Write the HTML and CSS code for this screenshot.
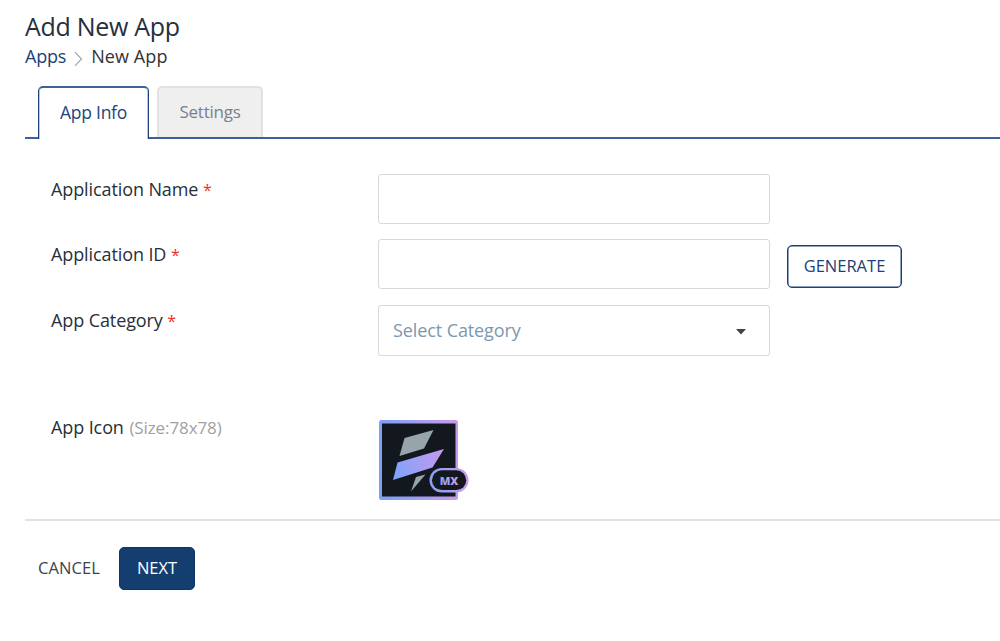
FILE: index.html
```html
<!DOCTYPE html>
<html lang="en">
<head>
<meta charset="utf-8">
<title>Add New App</title>
<link rel="stylesheet" href="styles.css">
</head>
<body>
<main class="page">
  <h1 class="title">Add New App</h1>
  <nav class="breadcrumb">
    <a class="crumb-link" href="#">Apps</a>
    <svg class="crumb-sep" width="9" height="16" viewBox="0 0 9 16"><path d="M1 1.2 7.5 8 1 14.8"/></svg>
    <span class="crumb-current">New App</span>
  </nav>
  <div class="tabs">
    <a class="tab tab-active" href="#">App Info</a>
    <a class="tab tab-idle" href="#">Settings</a>
  </div>
  <form class="form">
    <div class="row row-name">
      <label class="label">Application Name <span class="req">*</span></label>
      <div class="field"></div>
    </div>
    <div class="row row-id">
      <label class="label">Application ID <span class="req">*</span></label>
      <div class="field"></div>
      <button class="btn generate" type="button">GENERATE</button>
    </div>
    <div class="row">
      <label class="label">App Category <span class="req">*</span></label>
      <div class="field select">
        <span class="placeholder">Select Category</span>
        <svg width="10" height="6" viewBox="0 0 10 6"><path d="M0 0h10L5 5.5z" fill="#444"/></svg>
      </div>
    </div>
    <div class="row icon-row">
      <label class="label">App Icon <span class="hint">(Size:78x78)</span></label>
      <svg class="app-icon" width="92" height="82" viewBox="0 0 92 82">
        <defs>
          <linearGradient id="edge" gradientUnits="userSpaceOnUse" x1="1" y1="40" x2="80" y2="34"><stop offset="0" stop-color="#7ba1f5"/><stop offset="1" stop-color="#c99bea"/></linearGradient>
          <linearGradient id="band" x1="0" x2="1" y1=".6" y2=".4"><stop offset="0" stop-color="#7fa4fa"/><stop offset="1" stop-color="#c39af0"/></linearGradient>
          <linearGradient id="pill" x1="0" x2="1"><stop offset="0" stop-color="#86a0f3"/><stop offset="1" stop-color="#cc9bea"/></linearGradient>
        </defs>
        <rect x="1" y="0" width="79" height="80" rx="2.5" fill="url(#edge)"/>
        <rect x="4" y="3.5" width="73.5" height="73" fill="#12181e"/>
        <path d="M26.5 18 55.5 10 46 28.5 21.5 36z" fill="#98a4ab"/>
        <path d="M19.5 42.5 66 29 54.5 47.5 15 60z" fill="url(#band)"/>
        <path d="M38 57 47.5 54.5 33 71.5z" fill="#98a4ab"/>
        <rect x="51.5" y="48" width="39" height="24.5" rx="12.25" fill="url(#pill)"/>
        <rect x="54" y="50.3" width="34.2" height="19.8" rx="9.9" fill="#12181e"/>
        <text class="badge-text" x="71" y="64.5" text-anchor="middle" fill="url(#pill)">MX</text>
      </svg>
    </div>
  </form>
  <footer class="actions">
    <a class="cancel" href="#">CANCEL</a>
    <button class="btn next" type="button">NEXT</button>
  </footer>
</main>
</body>
</html>
```
FILE: styles.css
```css
* { box-sizing: border-box; }
body {
  margin: 0;
  background: #fff;
  color: #26303a;
  font-family: "Open Sans", "Noto Sans", sans-serif;
  font-size: 18px;
  letter-spacing: -0.1px;
  overflow: hidden;
}
a { text-decoration: none; }
.page { padding: 9px 0 0 25px; }
.title {
  margin: 0;
  font-size: 25px;
  line-height: 34px;
  font-weight: 400;
  letter-spacing: -0.3px;
}
.breadcrumb {
  display: flex;
  align-items: center;
  height: 26px;
  margin-bottom: 17px;
}
.crumb-link { color: #1a4178; letter-spacing: -0.2px; }
.crumb-sep { margin: 5px 8px 0 8px; fill: none; stroke: #a3a7ab; stroke-width: 1.2; }
.crumb-current { color: #333; letter-spacing: 0.1px; }
.tabs {
  display: flex;
  align-items: flex-end;
  gap: 8px;
  height: 53px;
  padding-left: 13px;
  background: linear-gradient(#3b6399, #3b6399) 0 51px / 100% 2px no-repeat;
}
.tab {
  display: flex;
  align-items: center;
  justify-content: center;
  border-radius: 5px 5px 0 0;
  padding-bottom: 3px;
  font-size: 17.5px;
  letter-spacing: -0.25px;
}
.tab-active {
  width: 111px;
  height: 53px;
  border: 1px solid #1d447c;
  border-top: 2px solid #3b6399;
  border-bottom: 0;
  background: #fff;
  box-shadow: inset 1px 0 #b9c7da, inset -1px 0 #b9c7da;
  color: #1d447c;
}
.tab-idle {
  width: 106px;
  height: 51px;
  margin-bottom: 2px;
  border: 2px solid #e2e2e2;
  border-bottom: 0;
  background: #efefef;
  color: #77818c;
  font-size: 17px;
}
.form { padding: 35px 0 0 26px; }
.row { display: flex; align-items: flex-start; height: 65.5px; }
.row-name { height: 65px; }
.row-id { height: 66px; }
.label { width: 327px; padding-top: 3px; line-height: 25px; }
.req { margin-left: 0; color: #ef3325; font-size: 16px; }
.field {
  width: 392px;
  height: 50px;
  border: 1px solid #d8d8d8;
  border-radius: 3px;
}
.select {
  display: flex;
  align-items: center;
  justify-content: space-between;
  height: 51px;
  padding: 0 23px 0 14px;
}
.placeholder { margin-bottom: 2px; color: #7b98af; }
.select svg { margin-top: 3px; }
.btn { font: inherit; border-radius: 5px; padding: 0 0 2px; }
.generate {
  width: 115px;
  height: 43px;
  margin: 6px 0 0 17px;
  border: 1px solid #1a4178;
  box-shadow: inset 0 0 0 0.5px #1a4178;
  background: #fff;
  color: #1a4178;
  font-size: 16.5px;
}
.icon-row { height: 104px; margin-top: 42px; }
.icon-row .label { padding-top: 2px; }
.app-icon { margin-top: 7px; }
.badge-text { font: 800 11px "Open Sans", sans-serif; letter-spacing: 0; }
.hint { margin-left: 1px; color: #a1a1a1; font-size: 17px; letter-spacing: -0.1px; }
.actions {
  display: flex;
  align-items: center;
  gap: 19px;
  margin-top: 2px;
  padding: 26px 0 0 13px;
  border-top: 2px solid #e2e2e2;
}
.cancel { padding-bottom: 2px; color: #3b444d; font-size: 16.5px; letter-spacing: 0.1px; }
.next {
  width: 76px;
  height: 43px;
  border: 1px solid #0e3468;
  background: #153e70;
  color: #fff;
  font-size: 16.5px;
}
```
